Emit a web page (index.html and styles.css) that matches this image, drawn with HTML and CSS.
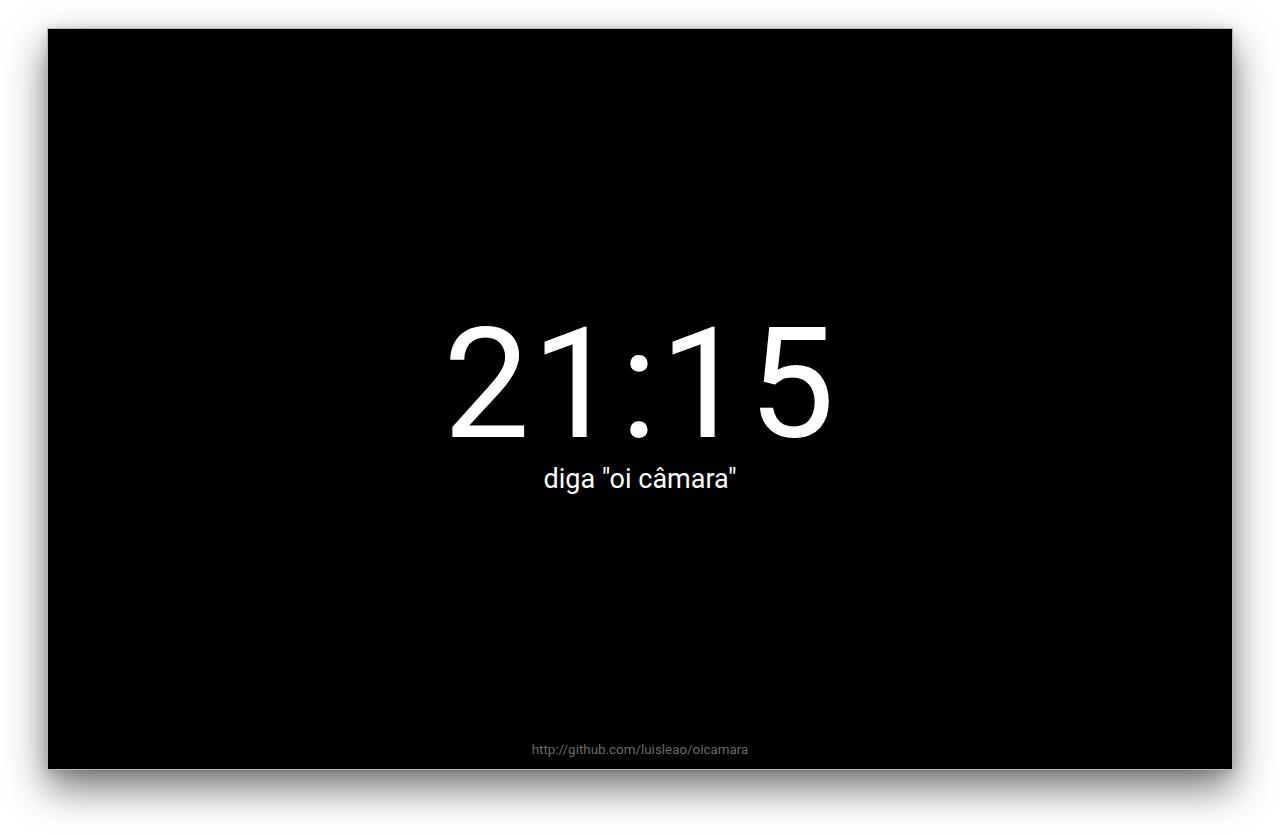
FILE: index.html
```html
<!DOCTYPE html>
<html lang="pt">
<head>
<meta charset="utf-8">
<title>oi câmara</title>
<link rel="stylesheet" href="styles.css">
</head>
<body>
<main class="screen">
  <section class="clock-group">
    <div class="clock">21:15</div>
    <div class="hint">diga "oi câmara"</div>
  </section>
  <footer class="footer">http://github.com/luisleao/oicamara</footer>
</main>
</body>
</html>
```
FILE: styles.css
```css
html, body {
  margin: 0;
  padding: 0;
  background: #ffffff;
}
body {
  padding: 28px 47px 0 47px;
  font-family: Roboto, "Liberation Sans", sans-serif;
  height: 835px;
  box-sizing: border-box;
  overflow: hidden;
}
.screen {
  width: 1186px;
  height: 742px;
  box-sizing: border-box;
  background: #000;
  border: 1px solid #b8b8b8;
  box-shadow: 0 18px 38px rgba(0,0,0,0.55), 0 2px 10px rgba(0,0,0,0.15);
  display: flex;
  flex-direction: column;
  align-items: center;
  color: #fff;
}
.clock-group {
  flex: 1;
  display: flex;
  flex-direction: column;
  align-items: center;
  justify-content: center;
  padding-top: 43px;
}
.clock {
  font-size: 154px;
  line-height: 130px;
  font-weight: 400;
  letter-spacing: 2px;
}
.hint {
  font-size: 27px;
  line-height: 30px;
  margin-top: 14px;
}
.footer {
  font-size: 13.4px;
  color: #6a6a6a;
  line-height: 16px;
  padding-bottom: 11px;
}
```
